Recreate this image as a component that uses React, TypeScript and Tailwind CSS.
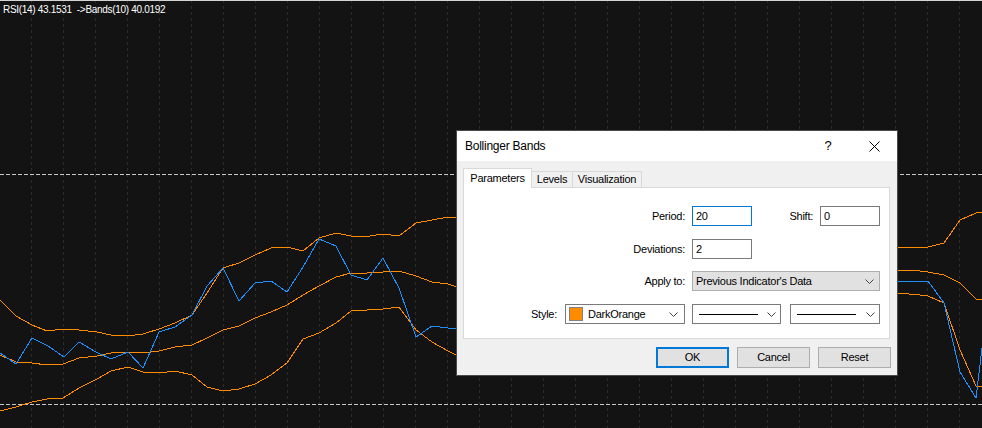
import React from 'react'

const blue = [[0,353],[16,364],[32,338],[48,346],[64,357],[79,342],[96,352],[111,359],[128,352],[143,368],[159,332],[175,327],[192,315],[207,286],[223,268],[239,301],[255,283],[271,281],[287,292],[303,267],[319,239],[336,246],[351,275],[367,280],[383,258],[399,288],[416,337],[432,326],[448,328],[460,328],[600,300],[800,290],[897,281],[928,281],[944,303],[960,372],[976,398],[992,265]]
const upper = [[0,300],[16,316],[32,325],[47,331],[63,329],[79,330],[97,332],[111,335],[128,336],[143,334],[159,329],[175,323],[192,315],[207,293],[223,268],[239,263],[255,255],[271,248],[287,247],[303,251],[319,238],[336,233],[351,236],[370,236],[383,234],[399,236],[416,223],[432,220],[448,217],[460,218],[600,228],[800,240],[897,247],[928,247],[944,243],[960,220],[976,213],[992,212]]
const middle = [[0,355],[16,362],[32,363],[47,365],[63,364],[79,358],[97,356],[111,353],[128,352],[143,353],[159,351],[175,347],[192,345],[207,338],[223,330],[239,326],[255,318],[271,312],[287,305],[303,295],[319,286],[336,277],[351,273],[367,273],[383,272],[399,271],[416,276],[432,282],[448,284],[460,288],[600,285],[800,272],[897,270],[920,271],[928,272],[944,275],[960,283],[976,299],[992,299]]
const lower = [[0,411],[16,407],[32,402],[47,399],[63,398],[79,388],[97,379],[111,371],[128,367],[143,372],[159,373],[175,371],[192,375],[207,387],[223,391],[239,389],[255,384],[271,375],[287,363],[303,339],[319,333],[336,323],[351,311],[367,310],[383,309],[399,307],[416,330],[432,342],[448,351],[460,357],[600,330],[800,300],[897,293],[920,295],[928,296],[944,303],[960,350],[976,386],[992,386]]

const pts = (a: number[][]) => a.map((p) => p.join(',')).join(' ')

const Chevron = () => (
  <svg width="9" height="5" viewBox="0 0 9 5" className="shrink-0">
    <polyline points="0.5,0.5 4.5,4.5 8.5,0.5" fill="none" stroke="#444" strokeWidth="1" />
  </svg>
)

const Chart = () => (
  <svg width="982" height="428" className="absolute left-0 top-0" shapeRendering="crispEdges">
    {Array.from({ length: 30 }).map((_, i) => (
      <line key={i} x1={31.5 + i * 32} y1="0" x2={31.5 + i * 32} y2="428" stroke="#2c2c2c" strokeDasharray="3 3" />
    ))}
    <line x1="0" y1="174.5" x2="982" y2="174.5" stroke="#c8c8c8" strokeDasharray="4 2" />
    <line x1="0" y1="404.5" x2="982" y2="404.5" stroke="#c8c8c8" strokeDasharray="4 2" />
    <polyline points={pts(upper)} fill="none" stroke="#ff8c00" strokeWidth="1" />
    <polyline points={pts(middle)} fill="none" stroke="#ff8c00" strokeWidth="1" />
    <polyline points={pts(lower)} fill="none" stroke="#ff8c00" strokeWidth="1" />
    <polyline points={pts(blue)} fill="none" stroke="#1e90ff" strokeWidth="1" />
  </svg>
)

const LineSelect = ({ w, line }: { w: string; line: string }) => (
  <div className={`${w} h-[20px] bg-white border border-[#7a7a7a] flex items-center pl-[6px] pr-[4px]`}>
    <div className={`${line} h-px bg-black`} />
    <div className="flex-1" />
    <Chevron />
  </div>
)

const Dialog = () => (
  <div className="absolute left-[456px] top-[130px] w-[442px] h-[246px] border border-[#4a4a4a] bg-[#f0f0f0] flex flex-col text-black font-['Liberation_Sans',Arial,sans-serif]">
    <div className="h-[30px] bg-white flex items-center shrink-0">
      <span className="pl-[8px] flex-1 text-[12px] tracking-[-0.25px]">Bollinger Bands</span>
      <div className="w-[46px] h-full flex items-center justify-center text-[13px]">?</div>
      <div className="w-[46px] h-full flex items-center justify-center">
        <svg width="11" height="11" viewBox="0 0 11 11">
          <path d="M0.5 0.5 L10.5 10.5 M10.5 0.5 L0.5 10.5" stroke="#000" strokeWidth="1" fill="none" />
        </svg>
      </div>
    </div>
    <div className="flex-1 pt-[7px] px-[6px] text-[11px] tracking-[-0.25px]">
      <div className="h-[19px] flex items-end">
        <div className="relative z-10 w-[69px] h-[20px] -mb-px bg-white border border-b-0 border-[#d9d9d9] flex items-center justify-center">
          Parameters
        </div>
        <div className="w-[41px] h-[16px] border border-l-0 border-b-0 border-[#d9d9d9] flex items-center justify-center">
          Levels
        </div>
        <div className="w-[69px] h-[16px] border border-l-0 border-b-0 border-[#d9d9d9] flex items-center justify-center">
          Visualization
        </div>
      </div>
      <div className="w-[427px] h-[152px] bg-white border border-[#d9d9d9]">
        <div className="flex items-center h-[20px] mt-[18px]">
          <span className="w-[221px] text-right">Period:</span>
          <div className="ml-[7px] w-[60px] h-[20px] border border-[#0078d7] pl-[3px] flex items-center">20</div>
          <span className="w-[61px] text-right">Shift:</span>
          <div className="ml-[7px] w-[60px] h-[20px] border border-[#7a7a7a] pl-[3px] flex items-center">0</div>
        </div>
        <div className="flex items-center h-[20px] mt-[13px]">
          <span className="w-[221px] text-right">Deviations:</span>
          <div className="ml-[7px] w-[60px] h-[20px] border border-[#7a7a7a] pl-[3px] flex items-center">2</div>
        </div>
        <div className="flex items-center h-[20px] mt-[12px]">
          <span className="w-[221px] text-right">Apply to:</span>
          <div className="ml-[7px] w-[188px] h-[20px] bg-[#e1e1e1] border border-[#adadad] pl-[3px] pr-[5px] flex items-center">
            <span className="flex-1">Previous Indicator's Data</span>
            <Chevron />
          </div>
        </div>
        <div className="flex items-center h-[20px] mt-[13px]">
          <span className="w-[93px] text-right">Style:</span>
          <div className="ml-[8px] w-[120px] h-[20px] bg-white border border-[#7a7a7a] pl-[3px] pr-[6px] flex items-center">
            <div className="w-[14px] h-[14px] bg-[#ff8c00] border border-[#808080]" />
            <span className="ml-[5px] flex-1">DarkOrange</span>
            <Chevron />
          </div>
          <div className="ml-[7px]">
            <LineSelect w="w-[89px]" line="w-[59px]" />
          </div>
          <div className="ml-[9px]">
            <LineSelect w="w-[90px]" line="w-[59px]" />
          </div>
        </div>
      </div>
      <div className="mt-[8px] flex justify-end gap-[8px]">
        <button className="w-[73px] h-[21px] bg-[#e1e1e1] border-2 border-[#0078d7]">OK</button>
        <button className="w-[73px] h-[21px] bg-[#e1e1e1] border border-[#adadad]">Cancel</button>
        <button className="w-[73px] h-[21px] bg-[#e1e1e1] border border-[#adadad]">Reset</button>
      </div>
    </div>
  </div>
)

const App = () => {
  return (
    <div className="relative w-[982px] h-[428px] bg-[#131313] overflow-hidden">
      <Chart />
      <div className="absolute left-0 top-0 w-full h-px bg-[#d4d4d4]" />
      <div className="absolute left-[3px] top-[4px] text-[10px] leading-[12px] tracking-[-0.3px] text-white whitespace-pre font-['Liberation_Sans',Arial,sans-serif]">
        RSI(14) 43.1531  -&gt;Bands(10) 40.0192
      </div>
      <Dialog />
    </div>
  )
}

export default App
